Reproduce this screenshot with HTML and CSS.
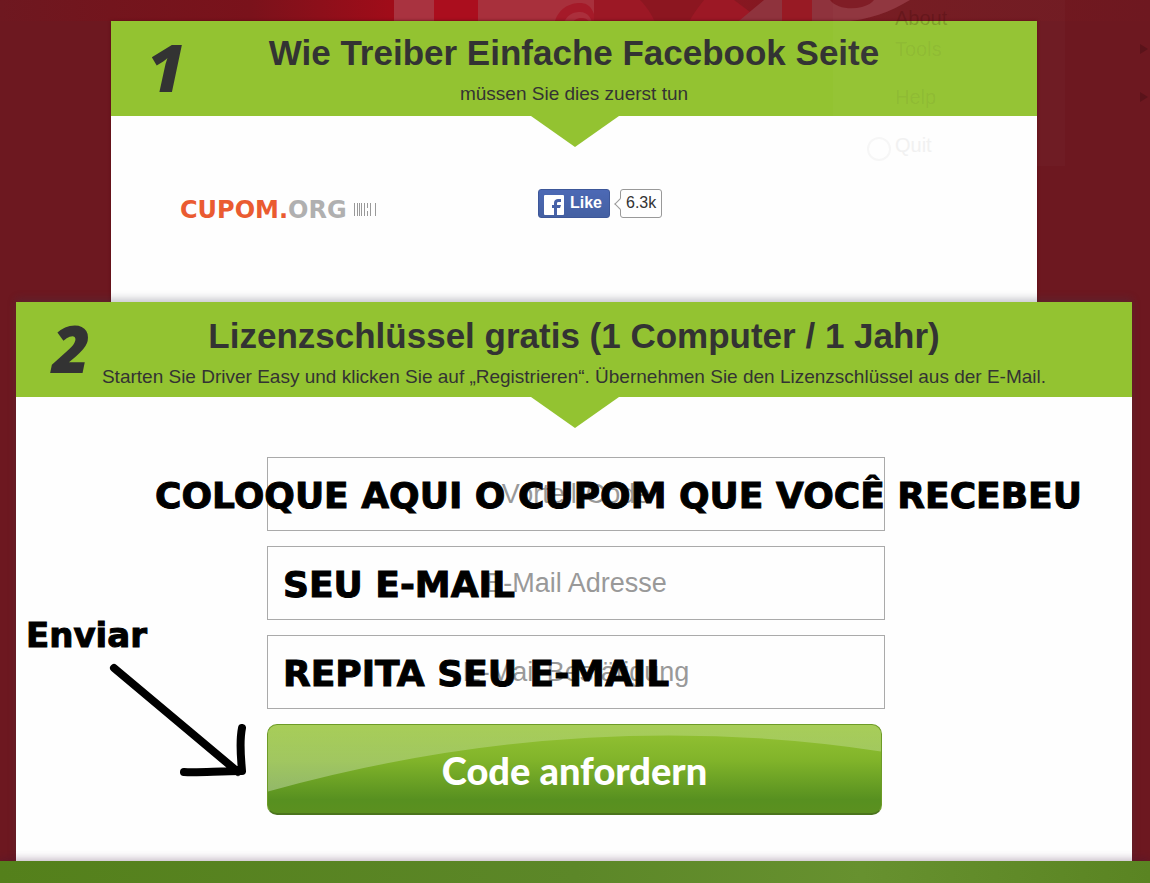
FILE: index.html
```html
<!DOCTYPE html>
<html lang="de">
<head>
    <meta charset="UTF-8">
    <meta name="viewport" content="width=device-width, initial-scale=1.0">
    <title>Lizenzschlüssel gratis</title>
    <link rel="stylesheet" href="styles.css">
</head>
<body>
    <div class="ribbon">
        <svg width="600" height="30" viewBox="0 0 600 30" aria-hidden="true">
            <rect x="54" width="40" height="30" fill="#a93340"/>
            <rect x="94" width="44" height="30" fill="#ab0e1e"/>
            <rect x="138" width="118" height="30" fill="#a8303c"/>
            <path d="M214 24C218 8 230 3 240 3s16 8 16 27" fill="#a51a29"/>
            <path d="M222 30c2-14 10-18 18-18s12 6 14 18" fill="#ab2f3c"/>
            <path d="M230 30c2-10 6-12 12-12s8 4 10 12" fill="#a51a29"/>
            <path d="M254 0h140l40 30H254z" fill="#9c1825"/>
            <path d="M300 0h64c-8 10-14 18-18 30h-28c-4-12-10-22-18-30z" fill="#8c1620"/>
            <path d="M424 0h146c-20 12-40 20-70 22l-90 8h-22z" fill="#8f333d"/>
            <rect x="442" width="30" height="30" fill="#981a24"/>
            <path d="M490 0c6 8 20 10 32 7 6-2 10-4 12-7z" fill="#7e1922"/>
        </svg>
    </div>

    <main>
        <section class="step step-one">
            <header class="step-header">
                <span class="number">1</span>
                <h1>Wie Treiber Einfache Facebook Seite</h1>
                <p>müssen Sie dies zuerst tun</p>
            </header>
            <div class="social">
                <a class="logo" href="#">
                    <span><b>CUPOM.</b>ORG</span>
                    <svg width="24" height="13" viewBox="0 0 24 13" aria-hidden="true">
                        <path d="M1.500 0v13M4.500 0v13M6.500 0v13M8.500 0v13M11.500 0v13M14.500 0v5M14.500 8v5M17.500 0v13M22.500 0v13" stroke="#999" fill="none"/>
                    </svg>
                </a>
                <div class="like">
                    <button type="button" class="like-button">
                        <svg width="20" height="20" viewBox="0 0 20 20" aria-hidden="true">
                            <rect width="20" height="20" rx="1" fill="#fff"/>
                            <path d="M10 20v-7H8v-3h2V8c0-3 2-4 4-4h3v3h-2c-1 0-2 0-2 1v2h4l-1 3h-3v7z" fill="#4862a8"/>
                        </svg>
                        Like
                    </button>
                    <span class="count">6.3k</span>
                </div>
            </div>
            <ul class="ghost-menu" aria-hidden="true">
                <li class="about">About</li>
                <li class="more">Tools</li>
                <li class="more">Help</li>
                <li class="quit">Quit</li>
            </ul>
        </section>

        <section class="step step-two">
            <header class="step-header">
                <span class="number">2</span>
                <h1>Lizenzschlüssel gratis (1 Computer / 1 Jahr)</h1>
                <p>Starten Sie Driver Easy und klicken Sie auf „Registrieren“. Übernehmen Sie den Lizenzschlüssel aus der E-Mail.</p>
            </header>
            <form class="form">
                <div class="field">
                    <input type="text" aria-label="Vorteil-Code" placeholder="Vorteil-Code">
                    <span class="note note-code">COLOQUE AQUI O CUPOM QUE VOCÊ RECEBEU</span>
                </div>
                <div class="field">
                    <input type="email" aria-label="E-Mail Adresse" placeholder="E-Mail Adresse">
                    <span class="note">SEU E-MAIL</span>
                </div>
                <div class="field">
                    <input type="email" aria-label="E-Mail Bestätigung" placeholder="E-Mail Bestätigung">
                    <span class="note">REPITA SEU E-MAIL</span>
                </div>
                <button type="submit" class="submit">
                    <svg class="shine" viewBox="0 0 615 90" preserveAspectRatio="none" aria-hidden="true">
                        <defs>
                            <linearGradient id="shine" x1="0" y1="0" x2="0" y2="1">
                                <stop offset="0" stop-color="#fff" stop-opacity=".18"/>
                                <stop offset="1" stop-color="#fff" stop-opacity=".32"/>
                            </linearGradient>
                        </defs>
                        <path d="M0 0h615v27Q310-20 0 68z" fill="url(#shine)"/>
                    </svg>
                    <span>Code anfordern</span>
                </button>
                <div class="send">
                    <span>Enviar</span>
                    <svg width="140" height="120" viewBox="0 0 140 120" aria-hidden="true">
                        <path d="M8 7L132 111M136 67C133 82 135 96 136 110M78 111C92 112 112 110 136 110" fill="none" stroke="#000" stroke-width="8" stroke-linecap="round" stroke-linejoin="round"/>
                    </svg>
                </div>
            </form>
        </section>
    </main>

    <footer class="bottom"></footer>
</body>
</html>
```

FILE: styles.css
```css
* {
    box-sizing: border-box;
}

body {
    margin: 0;
    min-height: 100vh;
    display: flex;
    flex-direction: column;
    position: relative;
    font-family: "Liberation Sans", Arial, sans-serif;
    color: #333;
    background: linear-gradient(90deg, #6e1820 0, #73151d 110px, #7a121b 250px, #a00c19 390px, #981623 600px, #74191f 900px, #6e1820 100%) top / 100% 21px no-repeat, #6d1820;
    overflow-x: hidden;
}

.ribbon {
    position: absolute;
    top: 0;
    left: 50%;
    width: 600px;
    height: 30px;
    margin-left: -235px;
}

main {
    flex: 1;
    display: flex;
    flex-direction: column;
    padding: 21px 18px 0 16px;
}

.step {
    position: relative;
    background: #fefefe;
}

.step-one {
    height: 281px;
    margin: 0 95px;
    box-shadow: 0 0 3px #5a0d14;
}

.step-two {
    flex: 1;
    box-shadow: 0 -3px 8px rgba(60, 60, 80, 0.3);
}

.step-header {
    position: relative;
    height: 95px;
    padding-top: 10px;
    background: #93c331;
    text-align: center;
}

/* arrow under the green bar */
.step-header::after {
    content: "";
    position: absolute;
    top: 100%;
    left: 50%;
    margin-left: -43px;
    border: 44px solid transparent;
    border-top: 31px solid #93c331;
    border-bottom: 0;
}

.step-header h1 {
    margin: 0;
    font-size: 35px;
    line-height: 44px;
}

.step-header p {
    margin: 8px 0 0;
    font-size: 19px;
    line-height: 22px;
}

.step-two .step-header {
    padding-top: 12px;
}

.number {
    position: absolute;
    top: 12px;
    left: 36px;
    font: italic 800 66px/66px "Open Sans", sans-serif;
}

.social {
    display: grid;
    grid-template-columns: 1fr 1fr;
    align-items: start;
    padding: 73px 69px 0;
}

.logo {
    display: flex;
    align-items: center;
    justify-content: space-between;
    width: 197px;
    height: 41px;
    color: #b0b0b0;
    font: bold 24px/24px "DejaVu Sans", sans-serif;
    text-decoration: none;
}

.logo b {
    color: #ea5b31;
}

.like {
    display: flex;
    gap: 10px;
    justify-self: start;
    margin-left: -36px;
}

.like-button {
    display: flex;
    align-items: center;
    gap: 6px;
    height: 29px;
    padding: 0 7px 2px 5px;
    border: 1px solid #3d5799;
    border-radius: 3px;
    background: linear-gradient(#4c69b5, #4460a2);
    color: #fff;
    font: bold 16px/20px "Liberation Sans", Arial, sans-serif;
}

.like-button svg {
    margin-top: 4px;
}

.count {
    position: relative;
    height: 29px;
    padding: 0 5px;
    border: 1px solid #999;
    border-radius: 3px;
    font-size: 16px;
    line-height: 26px;
}

.count::before {
    content: "";
    position: absolute;
    top: 10px;
    left: -5px;
    width: 7px;
    height: 7px;
    border: solid #999;
    border-width: 0 0 1px 1px;
    background: #fff;
    transform: rotate(45deg);
}

/* faded tray menu */
.ghost-menu {
    position: absolute;
    top: -27px;
    right: -28px;
    width: 232px;
    height: 172px;
    margin: 0;
    padding: 0 0 0 62px;
    list-style: none;
    background: rgba(255, 255, 255, 0.02);
    color: rgba(60, 60, 40, 0.08);
    font-size: 20px;
    line-height: 48px;
    pointer-events: none;
}

.ghost-menu li {
    position: relative;
    height: 48px;
}

.ghost-menu .about {
    height: 31px;
    color: rgba(40, 0, 0, 0.2);
}

.ghost-menu .quit {
    color: #f1f1f1;
}

.ghost-menu .quit::before {
    content: "";
    position: absolute;
    top: 16px;
    left: -28px;
    width: 20px;
    height: 20px;
    border: 2px solid #f6f6f6;
    border-radius: 50%;
}

.ghost-menu .more::after {
    content: "";
    position: absolute;
    top: 19px;
    left: 245px;
    border: 5px solid transparent;
    border-left: 8px solid #5a131a;
    border-right: 0;
}

.form {
    position: relative;
    display: flex;
    flex-direction: column;
    gap: 15px;
    width: 618px;
    margin: 0 auto;
    padding: 60px 0 46px;
    left: 2px;
}

.field {
    position: relative;
}

.field input {
    display: block;
    width: 100%;
    height: 74px;
    padding: 0;
    border: 1px solid #aaa;
    background: #fefefe;
    font: 27px "Liberation Sans", Arial, sans-serif;
    text-align: center;
}

.field input::placeholder {
    color: #999;
}

.note,
.send {
    position: absolute;
    color: #000;
    font: bold 36px/44px "DejaVu Sans", sans-serif;
    -webkit-text-stroke: 1px #000;
    white-space: nowrap;
    pointer-events: none;
}

.note {
    top: 17px;
    left: 16px;
}

.note-code {
    left: -112px;
}

.submit {
    position: relative;
    width: 615px;
    height: 91px;
    padding: 2px 0 0;
    border: 1px solid #6d9b27;
    border-bottom: 2px solid #4b741d;
    border-radius: 10px;
    background: linear-gradient(#95c334, #81b42a 40%, #579020 85%, #5b901f);
    color: #fff;
    font: 900 38px/44px Lato, sans-serif;
    overflow: hidden;
}

.submit span {
    position: relative;
}

.shine {
    position: absolute;
    inset: 0;
    width: 100%;
    height: 100%;
}

.send {
    top: 216px;
    left: -241px;
    font-size: 34px;
}

.send svg {
    display: block;
    margin: 4px 0 0 80px;
}

.bottom {
    position: relative;
    height: 22px;
    background: linear-gradient(90deg, #54801b, #5c8728 50%, #67912f 75%, #5a8422);
    box-shadow: 0 -2px 8px rgba(60, 20, 60, 0.3);
}
```
